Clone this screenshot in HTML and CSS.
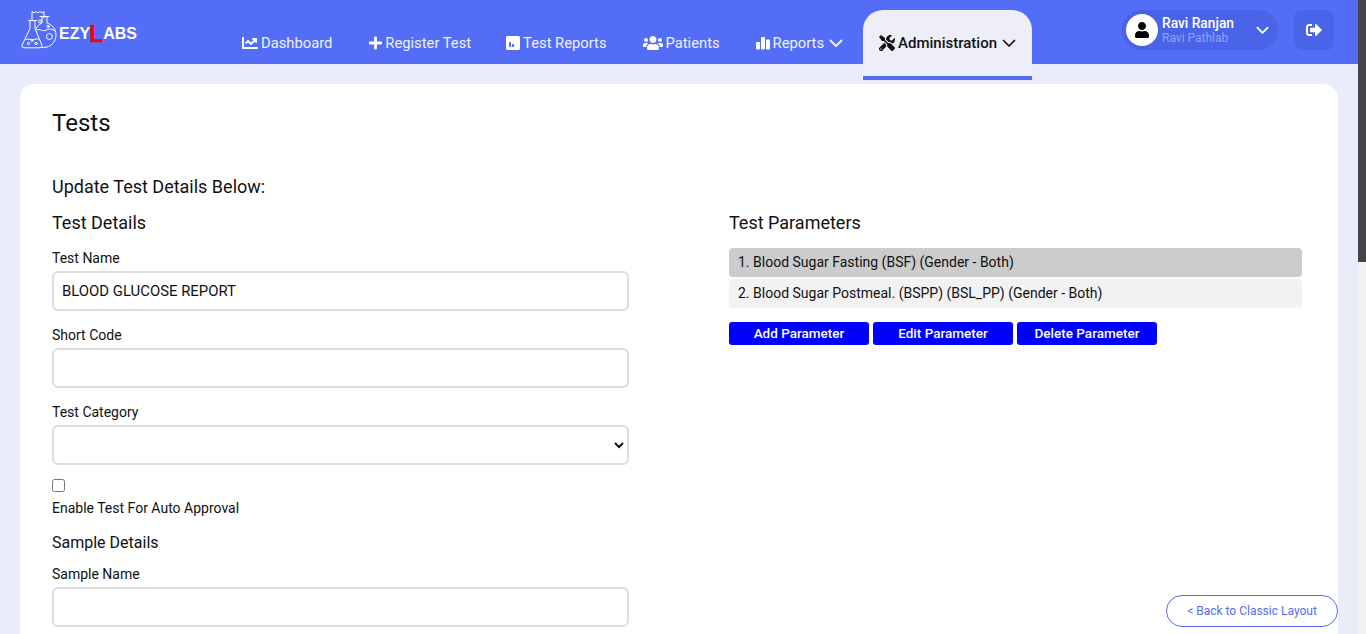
FILE: index.html
```html
<!DOCTYPE html>
<html lang="en">
<head>
<meta charset="utf-8">
<title>Tests</title>
<link rel="stylesheet" href="styles.css">
</head>
<body>
<div class="page">
  <div class="content">
  <header class="topbar">
    <a class="logo">
      <svg class="logo-mark" viewBox="0 0 42 38" fill="none" stroke="#fff" stroke-width="1" stroke-linejoin="round" stroke-linecap="round">
        <path d="M12 11V1.500l2 1.500 2-1.500 2 1.500 2-1.500 2 1.500 2-1.500V8"/>
        <g transform="translate(1 0)">
        <path d="M7.500 10.500h8M9 10.500v8L1.200 35c-.8 1.600.2 2.800 1.800 2.800h16c1.600 0 2.600-1.200 1.800-2.800L14 18.500v-8"/>
        <path d="M5 29.500c3-1.500 5 1 8 0s4-.5 5 0"/>
        <circle cx="7.500" cy="33.500" r="1.200"/><circle cx="11" cy="30.500" r="1"/><circle cx="15" cy="33.500" r="1.200"/>
        </g>
        <path d="M20 6.500h9M22 6.500v6.500c-3 1.500-6 4-6.500 7M27 6.500v6.500c5 1.500 9 6 9 12 0 7-5.500 12.500-12.500 12.500h-2"/>
        <path d="M17 20c3-2 5 1.500 8 .5s5-3 10 .5"/>
        <circle cx="20" cy="11.500" r="1.500"/><circle cx="29.500" cy="26.500" r="3"/><circle cx="28" cy="16.500" r="1.200"/>
      </svg>
      <span class="logo-text">EZY<span class="logo-l">L</span>ABS</span>
    </a>
    <nav class="nav">
      <a class="nav-item"><svg class="ico" viewBox="0 0 512 512"><path d="M496 384H64V80c0-8.840-7.160-16-16-16H16C7.160 64 0 71.160 0 80v336c0 17.670 14.330 32 32 32h464c8.840 0 16-7.160 16-16v-32c0-8.840-7.160-16-16-16zM464 96H345.940c-21.380 0-32.090 25.850-16.970 40.970l32.400 32.400L288 242.750l-73.370-73.370c-12.500-12.500-32.760-12.500-45.250 0l-68.690 68.690c-6.250 6.250-6.250 16.380 0 22.630l22.620 22.620c6.250 6.250 16.380 6.250 22.630 0L192 237.250l73.370 73.370c12.500 12.500 32.760 12.500 45.250 0l96-96 32.400 32.400c15.120 15.120 40.970 4.410 40.970-16.970V112c.01-8.840-7.150-16-15.990-16z"/></svg>Dashboard</a>
      <a class="nav-item nav-item-shift"><svg class="ico ico-plus" viewBox="0 0 448 512"><path d="M416 208H272V64c0-17.670-14.330-32-32-32h-32c-17.670 0-32 14.330-32 32v144H32c-17.670 0-32 14.330-32 32v32c0 17.670 14.330 32 32 32h144v144c0 17.670 14.330 32 32 32h32c17.670 0 32-14.330 32-32V304h144c17.670 0 32-14.330 32-32v-32c0-17.670-14.330-32-32-32z"/></svg>Register Test</a>
      <a class="nav-item"><svg class="ico ico-poll" viewBox="0 0 448 512"><path d="M400 32H48C21.500 32 0 53.500 0 80v352c0 26.500 21.500 48 48 48h352c26.500 0 48-21.500 48-48V80c0-26.500-21.500-48-48-48zM160 368c0 8.840-7.160 16-16 16h-32c-8.840 0-16-7.160-16-16V240c0-8.840 7.160-16 16-16h32c8.840 0 16 7.160 16 16v128zm96 0c0 8.840-7.160 16-16 16h-32c-8.840 0-16-7.160-16-16v-64c0-8.840 7.160-16 16-16h32c8.840 0 16 7.160 16 16v64z"/></svg>Test Reports</a>
      <a class="nav-item"><svg class="ico ico-users" viewBox="0 0 640 512"><path d="M96 224c35.300 0 64-28.700 64-64s-28.700-64-64-64-64 28.700-64 64 28.700 64 64 64zm448 0c35.300 0 64-28.700 64-64s-28.700-64-64-64-64 28.700-64 64 28.700 64 64 64zm32 32h-64c-17.600 0-33.500 7.100-45.100 18.600 40.300 22.100 68.900 62 75.100 109.400h66c17.700 0 32-14.300 32-32v-32c0-35.300-28.700-64-64-64zm-256 0c61.900 0 112-50.100 112-112S381.900 32 320 32 208 82.100 208 144s50.100 112 112 112zm76.800 32h-8.300c-20.800 10-43.900 16-68.500 16s-47.600-6-68.500-16h-8.300C179.600 288 128 339.600 128 403.200V432c0 26.500 21.500 48 48 48h288c26.500 0 48-21.500 48-48v-28.800c0-63.600-51.600-115.200-115.200-115.200zm-223.700-13.400C161.500 263.100 145.600 256 128 256H64c-35.300 0-64 28.700-64 64v32c0 17.700 14.300 32 32 32h65.900c6.300-47.400 34.900-87.300 75.200-109.400z"/></svg>Patients</a>
      <a class="nav-item nav-item-menu"><svg class="ico ico-bars" viewBox="0 0 14 14"><rect x="0" y="6" width="4" height="7.500" rx="1"/><rect x="5" y="1" width="4" height="12.500" rx="1"/><rect x="10" y="3.500" width="4" height="10" rx="1"/></svg>Reports<svg class="chev" viewBox="0 0 14 9"><path d="M1.500 1.500L7 7l5.500-5.500"/></svg></a>
      <a class="nav-item nav-active"><svg class="ico ico-tools" viewBox="0 0 512 512"><path d="M501.100 395.700L384 278.600c-23.100-23.100-57.600-27.600-85.400-13.900L192 158.100V96L64 0 0 64l96 128h62.100l106.600 106.600c-13.600 27.800-9.200 62.300 13.900 85.400l117.100 117.100c14.600 14.600 38.200 14.600 52.700 0l52.700-52.700c14.500-14.600 14.500-38.200 0-52.700zM331.700 225c28.300 0 54.900 11 74.900 31l19.400 19.400c15.800-6.900 30.800-16.500 43.800-29.500 37.100-37.100 49.700-89.300 37.900-136.700-2.200-9-13.500-12.100-20.100-5.500l-74.400 74.400-67.900-11.300L334 98.900l74.400-74.400c6.600-6.600 3.400-17.900-5.700-20.200-47.400-11.700-99.600.9-136.600 37.900-28.500 28.500-41.900 66.100-41.200 103.600l82.100 82.100c8.100-1.900 16.500-2.900 24.700-2.900zm-103.900 82l-56.700-56.700L18.700 402.800c-25 25-25 65.500 0 90.500s65.500 25 90.500 0l123.600-123.600c-7.600-19.900-9.900-41.600-5-62.700zM64 472c-13.200 0-24-10.800-24-24 0-13.300 10.700-24 24-24s24 10.700 24 24c0 13.200-10.700 24-24 24z"/></svg>Administration<svg class="chev" viewBox="0 0 14 9"><path d="M1.500 1.500L7 7l5.500-5.500"/></svg></a>
    </nav>
    <div class="user-area">
      <div class="user-pill">
        <span class="avatar"><svg viewBox="0 0 448 512"><path d="M224 256c70.700 0 128-57.300 128-128S294.700 0 224 0 96 57.300 96 128s57.300 128 128 128zm89.600 32h-16.700c-22.200 10.200-46.900 16-72.900 16s-50.600-5.800-72.900-16h-16.700C60.200 288 0 348.200 0 422.400V464c0 26.500 21.500 48 48 48h352c26.500 0 48-21.500 48-48v-41.600c0-74.200-60.200-134.400-134.400-134.400z"/></svg></span>
        <span class="user-text"><span class="user-name">Ravi Ranjan</span><span class="user-org">Ravi Pathlab</span></span>
        <svg class="chev chev-user" viewBox="0 0 14 9"><path d="M1.500 1.500L7 7l5.500-5.500"/></svg>
      </div>
      <a class="logout"><svg viewBox="0 0 512 512"><path d="M497 273L329 441c-15 15-41 4.500-41-17v-96H152c-13.300 0-24-10.700-24-24v-96c0-13.300 10.700-24 24-24h136V88c0-21.400 25.900-32 41-17l168 168c9.300 9.400 9.300 24.600 0 34zM192 436v-40c0-6.600-5.400-12-12-12H96c-17.700 0-32-14.300-32-32V160c0-17.700 14.300-32 32-32h84c6.600 0 12-5.400 12-12V76c0-6.600-5.400-12-12-12H96c-53 0-96 43-96 96v192c0 53 43 96 96 96h84c6.600 0 12-5.400 12-12z"/></svg></a>
    </div>
  </header>
  <main class="card">
    <h1 class="title">Tests</h1>
    <h2 class="subtitle">Update Test Details Below:</h2>
    <div class="columns">
      <section class="col-left">
        <h3 class="section-head section-head-left">Test Details</h3>
        <label class="field-label">Test Name</label>
        <input class="field" type="text" value="BLOOD GLUCOSE REPORT">
        <label class="field-label">Short Code</label>
        <input class="field" type="text">
        <label class="field-label">Test Category</label>
        <select class="field"><option></option></select>
        <input class="check" type="checkbox">
        <label class="check-label">Enable Test For Auto Approval</label>
        <h4 class="sample-head">Sample Details</h4>
        <label class="field-label field-label-tight">Sample Name</label>
        <input class="field" type="text">
      </section>
      <section class="col-right">
        <h3 class="section-head">Test Parameters</h3>
        <ul class="param-list">
          <li class="param param-selected">1. Blood Sugar Fasting (BSF) (Gender - Both)</li>
          <li class="param">2. Blood Sugar Postmeal. (BSPP) (BSL_PP) (Gender - Both)</li>
        </ul>
        <div class="param-actions">
          <button class="btn">Add Parameter</button>
          <button class="btn">Edit Parameter</button>
          <button class="btn">Delete Parameter</button>
        </div>
      </section>
    </div>
  </main>
  </div>
  <div class="scrollbar"><div class="scrollbar-thumb"></div></div>
  <a class="classic">&lt; Back to Classic Layout</a>
</div>
</body>
</html>
```
FILE: styles.css
```css
* { box-sizing: border-box; }
html, body { margin: 0; height: 100%; overflow: hidden; }
body { font-family: Roboto, "Liberation Sans", sans-serif; color: #111; }

.page {
  display: flex;
  height: 100vh;
  background: #e9edf9;
}
.content { flex: 1; min-width: 0; height: 100vh; overflow: hidden; }
.scrollbar { flex: 0 0 8px; height: 100vh; background: #f1f1f1; }
.scrollbar-thumb { height: 262px; background: #45444a; }

.topbar {
  display: flex;
  height: 64px;
  background: #536df6;
  padding: 0 24px 0 20px;
}
.logo {
  flex: 0 0 204px;
  display: flex;
  align-items: flex-start;
  padding-top: 10px;
}
.logo-mark { width: 42px; height: 38px; flex: none; overflow: visible; }
.logo-text {
  margin-top: 12px;
  height: 24px;
  margin-left: -3px;
  font: 700 16px/24px "Liberation Sans", sans-serif;
  color: #fff;
  display: flex;
  align-items: flex-end;
}
.logo-l { color: #f00; font-size: 23px; line-height: 24px; margin-left: -1px; -webkit-text-stroke: 0.3px #f00; }

.nav { display: flex; align-items: flex-start; flex: 1; }
.nav-item {
  display: flex;
  align-items: center;
  height: 66px;
  margin-top: 10px;
  padding: 0 18px;
  font-size: 14.750px;
  color: #eef1ff;
  white-space: nowrap;
}
.nav-item-shift { padding: 0 17px 0 19px; }
.nav-item-menu { padding-right: 20px; }
.nav-item .ico { fill: #fff; width: 16px; height: 16px; margin-right: 3px; flex: none; }
.nav-item .ico-plus { width: 13px; margin-right: 3px; }
.nav-item .ico-poll { width: 14px; margin-right: 3px; }
.nav-item .ico-users { width: 20px; margin-right: 3px; }
.nav-item .ico-bars { width: 14px; height: 14px; margin-right: 3px; }
.chev {
  width: 14px;
  height: 9px;
  margin-left: 5px;
  fill: none;
  stroke: currentColor;
  stroke-width: 2;
  stroke-linecap: round;
  stroke-linejoin: round;
  flex: none;
}
.nav-active {
  height: 70px;
  padding: 0 16px;
  background: #eeeef8;
  border-radius: 20px 20px 0 0;
  border-bottom: 4px solid #536df6;
  color: #111;
  font-size: 15px;
  font-weight: 500;
}
.nav-active .ico { fill: #111; margin-right: 3px; }
.nav-active .chev { stroke-width: 1.700; }

.user-area { display: flex; align-items: flex-start; gap: 16px; padding-top: 10px; }
.user-pill {
  display: flex;
  align-items: center;
  width: 156px;
  height: 40px;
  padding: 0 9px 0 4px;
  border-radius: 20px;
  background: #4a64e8;
}
.avatar {
  width: 32px;
  height: 32px;
  border-radius: 50%;
  background: #fff;
  display: flex;
  align-items: center;
  justify-content: center;
  flex: none;
}
.avatar svg { width: 14px; height: 16px; }
.user-text { display: flex; flex-direction: column; margin-left: 4px; flex: 1; }
.user-name { font-size: 13.750px; font-weight: 500; line-height: 16px; color: #fff; }
.user-org { font-size: 12px; line-height: 14px; color: #8ea2f8; }
.chev-user { color: #fff; margin: 0; width: 13px; }
.logout {
  width: 40px;
  height: 40px;
  border-radius: 8px;
  background: #4a64e8;
  display: flex;
  align-items: center;
  justify-content: center;
}
.logout svg { width: 16px; height: 16px; fill: #fff; }

.card {
  margin: 20px;
  min-height: 1430px;
  background: #fff;
  border-radius: 14px;
  padding: 25px 36px 24px 32px;
}
.title { margin: 0; font-size: 24px; font-weight: 400; line-height: 28px; }
.subtitle { margin: 39px 0 0; font-size: 18px; font-weight: 400; line-height: 22px; }
.columns {
  display: grid;
  grid-template-columns: 577px 573px;
  column-gap: 100px;
  margin-top: 14px;
}
.section-head { margin: 0 0 14px; font-size: 18px; font-weight: 400; line-height: 22px; }
.section-head-left { margin-bottom: 16px; }
.col-left { display: flex; flex-direction: column; align-items: flex-start; }
.field-label { font-size: 14px; line-height: 16px; margin-bottom: 5px; }
.field {
  display: block;
  width: 100%;
  height: 40px;
  border: 2px solid #dcdcdc;
  border-radius: 6px;
  background: #fff;
  padding: 0 8px;
  font: 400 14.900px Roboto, sans-serif;
  color: #111;
  margin-bottom: 16px;
  outline: none;
}
select.field { margin-bottom: 14px; }
.check { width: 13px; height: 13px; margin: 0 0 8px; }
.check-label { font-size: 14px; line-height: 16px; }
.sample-head { margin: 17px 0 0; font-size: 16px; font-weight: 400; line-height: 20px; }
.field-label-tight { margin-top: 13px; }

.param-list { list-style: none; margin: 0; padding: 0; display: flex; flex-direction: column; gap: 2px; }
.param {
  height: 29px;
  padding: 0 9px 2px;
  display: flex;
  align-items: center;
  border-radius: 4px;
  background: #f2f2f2;
  font-size: 14px;
}
.param-selected { background: #cccccc; }
.param-actions { display: flex; gap: 4px; margin-top: 14px; }
.btn {
  width: 140px;
  height: 23px;
  border: 0;
  border-radius: 3px;
  background: #0000ff;
  color: #fff;
  font: 500 13.500px Roboto, sans-serif;
  padding: 0 0 2px;
}
.classic {
  position: fixed;
  left: 1166px;
  top: 595px;
  width: 172px;
  height: 32px;
  display: flex;
  align-items: center;
  justify-content: center;
  border: 1px solid #536df6;
  border-radius: 16px;
  background: #fff;
  color: #536df6;
  font-size: 12px;
}
```
